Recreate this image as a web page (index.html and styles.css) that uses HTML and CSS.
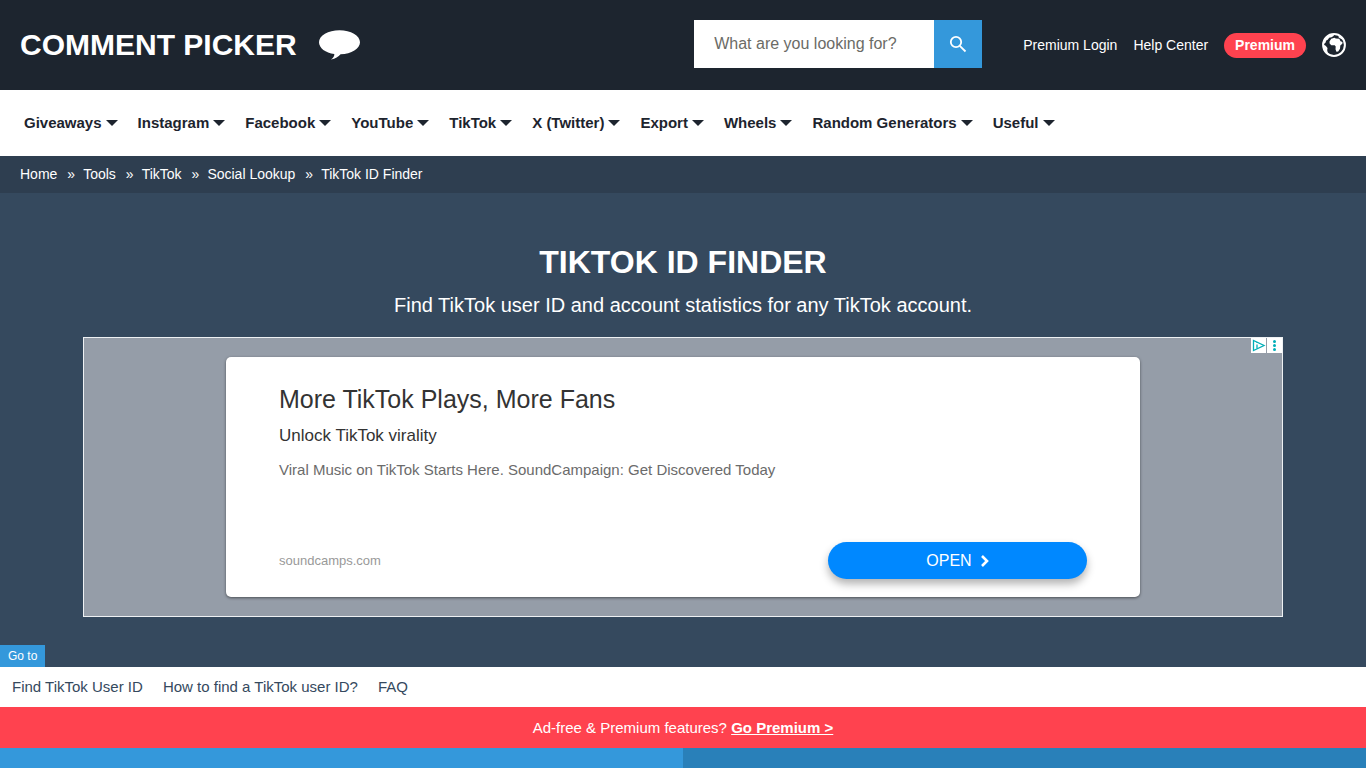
FILE: index.html
```html
<!DOCTYPE html>
<html lang="en">
<head>
<meta charset="utf-8">
<meta name="viewport" content="width=device-width, initial-scale=1">
<title>TikTok ID Finder</title>
<link rel="stylesheet" href="styles.css">
</head>
<body>
<header class="header">
  <a class="brand" href="#">COMMENT PICKER
    <svg class="brand-icon" viewBox="0 0 42 30" aria-hidden="true"><path d="M20.500.2C9.200.2 0 5.500 0 12.300c0 5.800 6.500 10.600 15.300 11.800.2 2-.8 3.800-3.300 5.400 4.500-.6 7.300-2.600 9.600-5.200C32.500 24 41 18.800 41 12.300 41 5.500 31.800.2 20.500.2z"/></svg>
  </a>
  <form class="search">
    <input class="search-input" type="search" placeholder="What are you looking for?" aria-label="Search">
    <button class="search-button" type="button" aria-label="Submit search">
      <svg width="18" height="18" viewBox="0 0 18 18" aria-hidden="true"><circle cx="7" cy="7" r="5.200"/><path d="M10.800 10.800l5.700 5.700"/></svg>
    </button>
  </form>
  <nav class="account" aria-label="Account">
    <a href="#">Premium Login</a>
    <a href="#">Help Center</a>
    <a class="pill" href="#">Premium</a>
    <a class="globe" href="#" aria-label="Language">
      <svg width="24" height="24" viewBox="0 0 24 24" aria-hidden="true"><circle class="ring" cx="12" cy="12" r="10.900"/><path d="M2.500 6.500C4.500 3.500 8 1.300 11 1.300l1 1.400-2.500 1.500-2.300.6-1.500 2-1.700 1-.3 1.700L1.500 11z"/><path d="M1.200 11.500l2.500 1.200 1.800 2.300-.3 2.200.8 3.300C3 18.500 1 15 1.200 11.500z"/><path d="M17.500 2.500l3.500 3-1.200.8-2.300-1.200-1.200-1.100z"/><path d="M7.500 8.500l1.700-2.800 3.300-.9 1.300.8 3.500.1 1.200 2.600 2 .7-.2 1.700-2 1.900-.3 3.200-1.800 2.600-1.800.4-.9-2.500.2-2.700-1-1.400-3.400.1-1.700-1.900z"/></svg>
    </a>
  </nav>
</header>

<nav class="menu" aria-label="Main">
  <button class="menu-item" type="button">Giveaways</button>
  <button class="menu-item" type="button">Instagram</button>
  <button class="menu-item" type="button">Facebook</button>
  <button class="menu-item" type="button">YouTube</button>
  <button class="menu-item" type="button">TikTok</button>
  <button class="menu-item" type="button">X (Twitter)</button>
  <button class="menu-item" type="button">Export</button>
  <button class="menu-item" type="button">Wheels</button>
  <button class="menu-item" type="button">Random Generators</button>
  <button class="menu-item" type="button">Useful</button>
</nav>

<nav class="crumbs" aria-label="Breadcrumb">
  <a href="#">Home</a><span class="sep">»</span>
  <a href="#">Tools</a><span class="sep">»</span>
  <a href="#">TikTok</a><span class="sep">»</span>
  <a href="#">Social Lookup</a><span class="sep">»</span>
  <a href="#">TikTok ID Finder</a>
</nav>

<main>
  <section class="hero">
    <h1 class="title">TIKTOK ID FINDER</h1>
    <p class="subtitle">Find TikTok user ID and account statistics for any TikTok account.</p>
    <aside class="ad">
      <div class="ad-options">
        <button class="ad-option" type="button" aria-label="Ad information"><svg width="15" height="15" viewBox="0 0 15 15" aria-hidden="true"><path class="line" d="M2.500 2.500v10L13 7.500z"/><path class="line" d="M6 6.500v4M6 4.300v.8"/></svg></button>
        <button class="ad-option" type="button" aria-label="Ad options"><svg width="15" height="15" viewBox="0 0 15 15" aria-hidden="true"><circle class="dot" cx="7.500" cy="3.500" r="1.500"/><circle class="dot" cx="7.500" cy="7.500" r="1.500"/><circle class="dot" cx="7.500" cy="11.500" r="1.500"/></svg></button>
      </div>
      <div class="ad-card">
        <h2 class="ad-title">More TikTok Plays, More Fans</h2>
        <p class="ad-lead">Unlock TikTok virality</p>
        <p class="ad-text">Viral Music on TikTok Starts Here. SoundCampaign: Get Discovered Today</p>
        <div class="ad-foot">
          <a class="ad-site" href="#">soundcamps.com</a>
          <a class="ad-open" href="#">OPEN <svg width="9" height="12" viewBox="0 0 9 12" aria-hidden="true"><path d="M2 1l5 5-5 5"/></svg></a>
        </div>
      </div>
    </aside>
    <span class="goto">Go to</span>
  </section>
  <nav class="jump" aria-label="Page sections">
    <a href="#">Find TikTok User ID</a>
    <a href="#">How to find a TikTok user ID?</a>
    <a href="#">FAQ</a>
  </nav>
  <p class="promo">Ad-free &amp; Premium features? <a href="#">Go Premium &gt;</a></p>
  <div class="split"><div class="split-left"></div><div class="split-right"></div></div>
</main>
</body>
</html>
```
FILE: styles.css
```css
* {
  box-sizing: border-box;
}

html,
body {
  height: 100%;
}

body {
  margin: 0;
  display: flex;
  flex-direction: column;
  background: #fff;
  color: #1d242e;
  font-family: "Liberation Sans", Arial, sans-serif;
  font-size: 14px;
}

a {
  color: inherit;
  text-decoration: none;
}

button {
  border: 0;
  padding: 0;
  font-family: inherit;
}

.header {
  display: flex;
  align-items: center;
  padding: 20px;
  background: #1d252f;
  color: #fff;
}

.brand {
  display: flex;
  align-items: center;
  gap: 22px;
  margin-right: auto;
  font-size: 30px;
  line-height: 50px;
  font-weight: bold;
}

.brand-icon {
  width: 42px;
  height: 30px;
  fill: #fff;
}

.search {
  display: flex;
  align-self: flex-start;
  height: 48px;
}

.search-input {
  width: 240px;
  padding: 0 20px;
  border: 0;
  border-radius: 0;
  background: #fff;
  font-family: inherit;
  font-size: 16px;
}

.search-input::placeholder {
  color: #6b6b66;
}

.search-button {
  display: grid;
  place-items: center;
  width: 48px;
  background: #3498db;
}

.search-button svg {
  fill: none;
  stroke: #fff;
  stroke-width: 1.800;
}

.account {
  display: flex;
  align-items: center;
  gap: 16px;
  margin-left: 41px;
}

.pill {
  padding: 0 11px;
  border-radius: 13px;
  background: #ff424f;
  line-height: 25px;
  font-weight: bold;
}

.globe {
  display: flex;
}

.globe svg {
  fill: #fff;
}

.globe .ring {
  fill: none;
  stroke: #fff;
  stroke-width: 2;
}

.menu {
  display: flex;
  gap: 20px;
  padding: 0 24px;
}

.menu-item {
  display: flex;
  align-items: center;
  gap: 4px;
  background: none;
  color: #1d242e;
  font-size: 15px;
  line-height: 66px;
  font-weight: bold;
}

.menu-item::after {
  content: "";
  border: 6px solid transparent;
  border-top-color: #1d242e;
  border-bottom: 0;
}

.crumbs {
  display: flex;
  padding: 0 20px;
  background: #2e3e50;
  color: #fff;
  line-height: 37px;
}

.sep {
  padding: 0 8px 0 10px;
}

main {
  display: flex;
  flex: 1;
  flex-direction: column;
}

.hero {
  display: flex;
  flex-direction: column;
  align-items: center;
  padding-top: 48px;
  background: #35495e;
  color: #fff;
}

.title {
  margin: 0;
  font-size: 32px;
  line-height: 42px;
}

.subtitle {
  margin: 6px 0 16px;
  font-size: 20px;
  line-height: 32px;
}

.ad {
  position: relative;
  width: calc(100% - 166px);
  max-width: 1200px;
  padding: 19px 142px;
  border: 1px solid #eef1f3;
  background: #959da8;
}

.ad-options {
  position: absolute;
  top: 0;
  right: 0;
  display: flex;
  gap: 1px;
}

.ad-option {
  display: flex;
  background: #fff;
}

.ad-option .line {
  fill: none;
  stroke: #00aeb8;
  stroke-width: 1.300;
}

.ad-option .dot {
  fill: #00aeb8;
}

.ad-card {
  padding: 26px 53px 18px;
  border-radius: 5px;
  background: #fff;
  box-shadow: 0 1px 3px rgba(0, 0, 0, 0.5);
}

.ad-title {
  margin: 0;
  color: #333;
  font-size: 25px;
  line-height: 32px;
  font-weight: normal;
}

.ad-lead {
  margin: 10px 0 12px;
  color: #333;
  font-size: 17px;
  line-height: 22px;
}

.ad-text {
  margin: 0;
  color: #6b6b6b;
  font-size: 15px;
  line-height: 22px;
}

.ad-foot {
  display: flex;
  align-items: center;
  justify-content: space-between;
  margin-top: 61px;
}

.ad-site {
  color: #999;
  font-size: 13px;
}

.ad-open {
  display: flex;
  align-items: center;
  justify-content: center;
  gap: 8px;
  width: 259px;
  border-radius: 19px;
  background: #0088ff;
  box-shadow: 0 5px 8px rgba(0, 0, 0, 0.3);
  font-size: 16px;
  line-height: 37px;
}

.ad-open svg {
  fill: none;
  stroke: #fff;
  stroke-width: 2.600;
}

.goto {
  align-self: flex-start;
  margin-top: 28px;
  padding: 0 8px;
  background: #3498db;
  font-size: 12px;
  line-height: 22px;
}

.jump {
  display: flex;
  gap: 20px;
  padding: 0 12px;
  color: #35495e;
  font-size: 15px;
  line-height: 40px;
}

.promo {
  margin: 0;
  background: #ff424f;
  color: #fff;
  font-size: 15px;
  line-height: 41px;
  text-align: center;
}

.promo a {
  font-weight: 900;
  text-decoration: underline;
}

.split {
  display: flex;
  flex: 1;
  min-height: 20px;
}

.split-left,
.split-right {
  flex: 1;
  background: #3498db;
}

.split-right {
  background: #2980b9;
}
```
